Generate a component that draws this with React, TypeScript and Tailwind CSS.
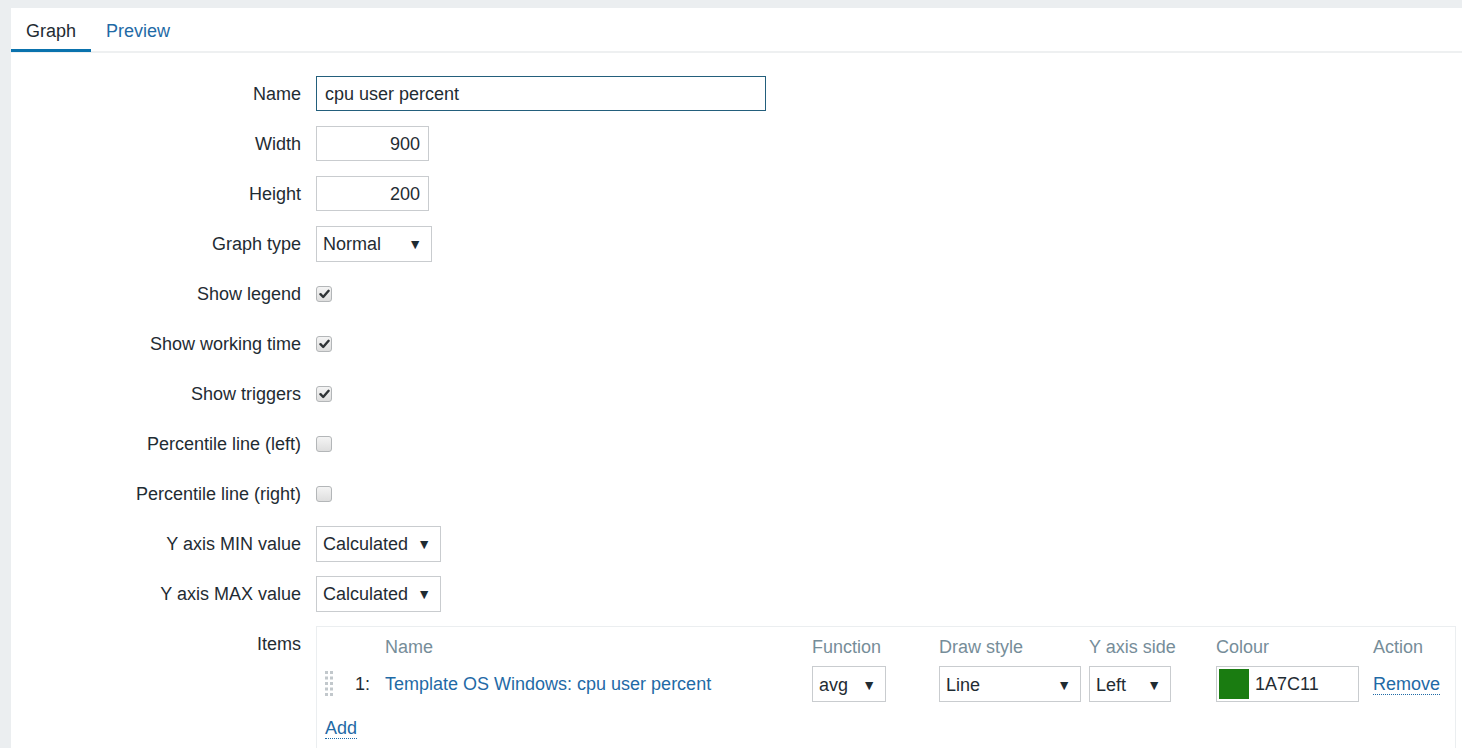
import React from "react";

const labelCls = "w-[305px] shrink-0 pr-[15px] text-right";

function Select({ value, width }: { value: string; width: string }) {
  return (
    <div className={`flex h-[36px] items-center justify-between border border-[#c9cccf] bg-white pl-[6px] pr-[9px] pt-[2px] ${width}`}>
      <span>{value}</span>
      <span className="text-[14px] text-[#1f2c33]">▼</span>
    </div>
  );
}

function Checkbox({ checked }: { checked: boolean }) {
  return (
    <div className="flex h-[16px] w-[16px] items-center justify-center rounded-[3px] border border-[#b3b6b8] bg-gradient-to-b from-[#f4f4f4] to-[#dedede]">
      {checked && (
        <svg width="11" height="10" viewBox="0 0 11 10">
          <path d="M1.5 5.2 L4.2 8 L9.6 1.8" fill="none" stroke="#2f3336" strokeWidth="2.4" strokeLinecap="round" strokeLinejoin="round" />
        </svg>
      )}
    </div>
  );
}

function Row({ label, children }: { label: string; children: React.ReactNode }) {
  return (
    <div className="mb-[15px] flex h-[35px] items-center">
      <div className={`${labelCls} pt-[2px]`}>{label}</div>
      {children}
    </div>
  );
}

function DragHandle() {
  const dots = [];
  for (let r = 0; r < 5; r++) {
    for (let c = 0; c < 2; c++) {
      dots.push(<rect key={`${r}-${c}`} x={c * 5} y={r * 5.5} width="3" height="3" fill="#c2c8cc" />);
    }
  }
  return (
    <svg width="8" height="26" viewBox="0 0 8 26">
      {dots}
    </svg>
  );
}

const cols = "grid-cols-[28px_40px_427px_127px_150px_127px_157px_1fr]";

export default function App() {
  return (
    <div className="min-h-screen bg-[#ebeef0] pl-[11px] pt-[8px] text-[18px] text-[#1f2c33]" style={{ fontFamily: '"Liberation Sans", Arial, sans-serif' }}>
      <div className="min-h-[740px] bg-white">
        <div className="flex h-[45px] border-b-2 border-[#eef0f1]">
          <div className="flex h-[44px] w-[80px] items-center justify-center border-b-[3px] border-[#0a72ad] pt-[5px]">Graph</div>
          <div className="flex h-[44px] items-center pl-[15px] pt-[2px] text-[#1f6aa6]">Preview</div>
        </div>

        <div className="pt-[23px]">
          <Row label="Name">
            <div className="flex h-[35px] w-[450px] items-center border border-[#235f7c] pl-[8px] pt-[2px]">cpu user percent</div>
          </Row>
          <Row label="Width">
            <div className="flex h-[35px] w-[113px] items-center justify-end border border-[#c9cccf] pr-[8px] pt-[2px]">900</div>
          </Row>
          <Row label="Height">
            <div className="flex h-[35px] w-[113px] items-center justify-end border border-[#c9cccf] pr-[8px] pt-[2px]">200</div>
          </Row>
          <Row label="Graph type">
            <Select value="Normal" width="w-[116px]" />
          </Row>
          <Row label="Show legend">
            <Checkbox checked />
          </Row>
          <Row label="Show working time">
            <Checkbox checked />
          </Row>
          <Row label="Show triggers">
            <Checkbox checked />
          </Row>
          <Row label="Percentile line (left)">
            <Checkbox checked={false} />
          </Row>
          <Row label="Percentile line (right)">
            <Checkbox checked={false} />
          </Row>
          <Row label="Y axis MIN value">
            <Select value="Calculated" width="w-[125px]" />
          </Row>
          <Row label="Y axis MAX value">
            <Select value="Calculated" width="w-[125px]" />
          </Row>

          <div className="flex">
            <div className={`${labelCls} pt-[5px]`}>Items</div>
            <div className="mr-[6px] flex-1 border border-[#ebeef0] pb-[10px] pt-[7px]">
              <div className={`grid h-[22px] ${cols} items-center text-[#768d99]`}>
                <div />
                <div />
                <div>Name</div>
                <div>Function</div>
                <div>Draw style</div>
                <div>Y axis side</div>
                <div>Colour</div>
                <div>Action</div>
              </div>
              <div className={`mt-[10px] grid h-[36px] ${cols} items-center`}>
                <div className="flex pl-[8px]">
                  <DragHandle />
                </div>
                <div className="pr-[15px] text-right">1:</div>
                <div className="text-[#1f6aa6]">Template OS Windows: cpu user percent</div>
                <div>
                  <Select value="avg" width="w-[74px]" />
                </div>
                <div>
                  <Select value="Line" width="w-[142px]" />
                </div>
                <div>
                  <Select value="Left" width="w-[82px]" />
                </div>
                <div>
                  <div className="flex h-[36px] w-[143px] items-center border border-[#c9cccf] pl-[2px]">
                    <div className="h-[30px] w-[30px] bg-[#1a7c11]" />
                    <span className="pl-[6px] pt-[1px]">1A7C11</span>
                  </div>
                </div>
                <div>
                  <span className="border-b border-dotted border-[#1f6aa6] text-[#1f6aa6]">Remove</span>
                </div>
              </div>
              <div className="mt-[13px] pl-[8px]">
                <span className="border-b border-dotted border-[#1f6aa6] text-[#1f6aa6]">Add</span>
              </div>
            </div>
          </div>
        </div>
      </div>
    </div>
  );
}
